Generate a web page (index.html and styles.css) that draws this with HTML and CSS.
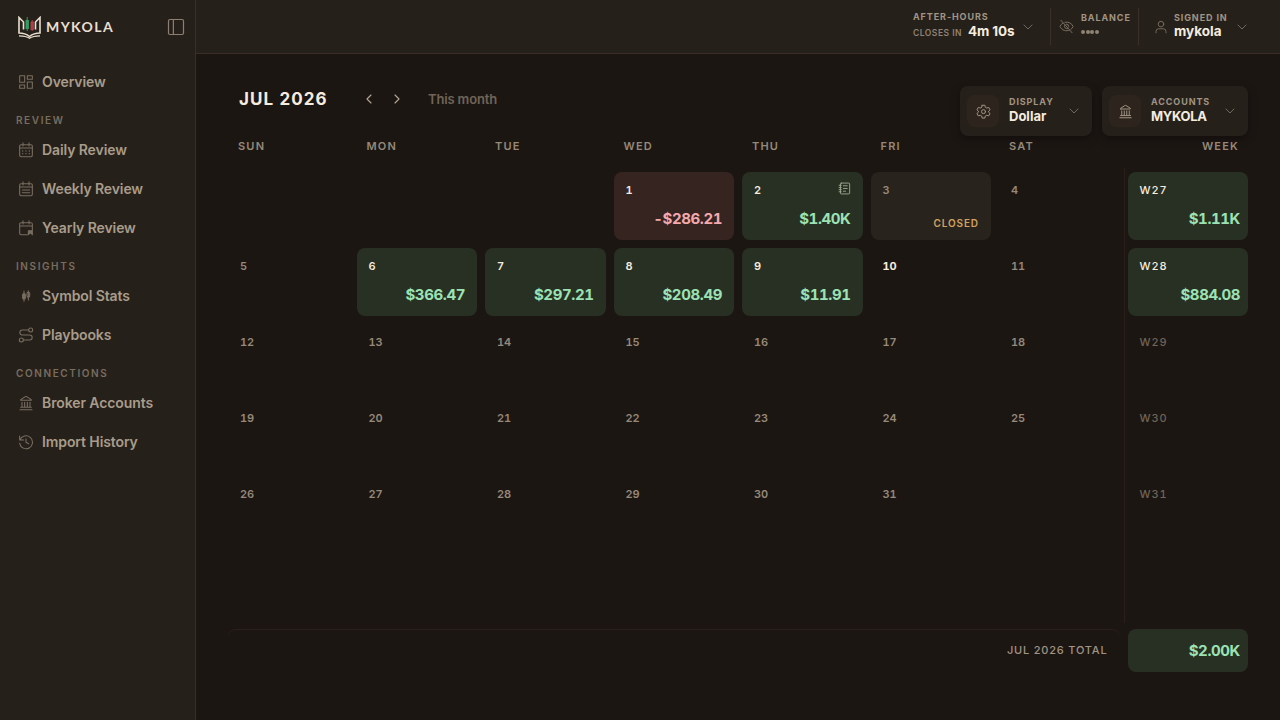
FILE: index.html
```html
<!DOCTYPE html>
<html lang="en">
<head>
  <meta charset="UTF-8" />
  <title>Mykola - Jul 2026</title>
  <link rel="stylesheet" href="styles.css">
</head>
<body>

  <!-- Shared icons -->
  <svg class="sprite" aria-hidden="true">
    <symbol id="i-chevron" viewBox="0 0 24 24"><path d="m6 9 6 6 6-6"/></symbol>
    <symbol id="i-bank" viewBox="0 0 24 24"><path d="M3 22h18M6 18v-7M10 18v-7M14 18v-7M18 18v-7M4 18.500h16M4.500 8h15a.6.6 0 0 0 .3-1.100L13 2.500a2 2 0 0 0-2 0L4.200 6.900A.6.6 0 0 0 4.500 8z"/></symbol>
  </svg>

  <div class="app">
    <!-- Sidebar -->
    <aside class="sidebar">
      <div class="brand">
        <svg class="logo" viewBox="0 0 25 23">
          <path class="book" d="M6.500 13.500V6L2 1.500V17C6 17 10 18.500 12.500 20.500 15 18.500 19 17 23 17V1.500L18.500 6V13.500"/>
          <path class="book thin" d="M2 19.800C6.500 19.800 10 20.500 12.500 22.300 15 20.500 18.500 19.800 23 19.800"/>
          <path class="up" d="M10.200 1v14"/>
          <rect class="up-body" x="8.500" y="4" width="3.400" height="9"/>
          <path class="down" d="M15.200 4v11"/>
          <rect class="down-body" x="13.500" y="5.500" width="3.400" height="8.500"/>
        </svg>
        <span class="brand-name">MYKOLA</span>
        <svg class="icon toggle" viewBox="0 0 24 24"><rect x="2" y="2" width="20" height="20" rx="2"/><path d="M8.500 2v20"/></svg>
      </div>

      <nav>
        <a class="nav-item"><svg class="icon" viewBox="0 0 24 24"><rect x="2.500" y="2.500" width="7.500" height="10"/><rect x="14" y="2.500" width="7.500" height="5.500"/><rect x="14" y="12" width="7.500" height="9.500"/><rect x="2.500" y="16.500" width="7.500" height="5"/></svg><span>Overview</span></a>

        <div class="nav-title">REVIEW</div>
        <a class="nav-item"><svg class="icon" viewBox="0 0 24 24"><rect x="2.500" y="4" width="19" height="18" rx="2"/><path d="M7.500 1v5M16.500 1v5M2.500 9h19"/><path class="bold" d="M7 13.500h.01M12 13.500h.01M17 13.500h.01M7 17.500h.01M12 17.500h.01M17 17.500h.01"/></svg><span>Daily Review</span></a>
        <a class="nav-item"><svg class="icon" viewBox="0 0 24 24"><rect x="2.500" y="4" width="19" height="18" rx="2"/><path d="M7.500 1v5M16.500 1v5M2.500 9h19M6.500 13.500h11M6.500 17.500h11"/></svg><span>Weekly Review</span></a>
        <a class="nav-item"><svg class="icon" viewBox="0 0 24 24"><path d="M14 22H4.500a2 2 0 0 1-2-2V6a2 2 0 0 1 2-2h15a2 2 0 0 1 2 2v9.500M7.500 1v5M16.500 1v5M2.500 9h19"/><path class="solid" d="M15.500 22v-6h6V22l-2.500-3z"/></svg><span>Yearly Review</span></a>

        <div class="nav-title">INSIGHTS</div>
        <a class="nav-item"><svg class="icon" viewBox="0 0 24 24"><path d="M9 4.500v15.500M15.500 4v14"/><rect class="solid" x="7" y="8.500" width="4" height="8" rx="1.500"/><rect x="13.500" y="6.500" width="4" height="7" rx="1.500"/></svg><span>Symbol Stats</span></a>
        <a class="nav-item"><svg class="icon" viewBox="0 0 24 24"><circle cx="19" cy="4.500" r="3"/><circle cx="5" cy="19.500" r="3"/><path d="M16 4.500H6.500a3.700 3.700 0 0 0 0 7.500h11a3.700 3.700 0 0 1 0 7.500H8"/></svg><span>Playbooks</span></a>

        <div class="nav-title">CONNECTIONS</div>
        <a class="nav-item"><svg class="icon"><use href="#i-bank"/></svg><span>Broker Accounts</span></a>
        <a class="nav-item"><svg class="icon" viewBox="0 0 24 24"><path d="M2.500 3v6h6M3 9a9.700 9.700 0 1 1-.5 5M12 7v5.500l4 2"/></svg><span>Import History</span></a>
      </nav>
    </aside>

    <div class="content">
      <!-- Top bar -->
      <header class="topbar">
        <div class="session">
          <div>
            <div class="label">AFTER-HOURS</div>
            <div class="session-row"><span class="closes">CLOSES IN</span><b class="countdown">4m 10s</b></div>
          </div>
          <svg class="icon chevron"><use href="#i-chevron"/></svg>
        </div>
        <div class="balance">
          <svg class="icon" viewBox="0 0 24 24"><path d="M3 2l18 20M9.500 5.200A11 11 0 0 1 22.500 12a15 15 0 0 1-3.200 4.500M6 6.500A14 14 0 0 0 1.500 12c3 6 9.500 8.500 15.500 5.800M9.500 9.500a3.800 3.800 0 0 0 5.300 5.300M12 8.200a3.800 3.800 0 0 1 3.800 3.800"/></svg>
          <div>
            <div class="label">BALANCE</div>
            <div class="dots"><i></i><i></i><i></i><i></i></div>
          </div>
        </div>
        <div class="user">
          <svg class="icon" viewBox="0 0 24 24"><circle cx="12" cy="7" r="4.800"/><path d="M3.500 22v-2.500a4.500 4.500 0 0 1 4.500-4.500h8a4.500 4.500 0 0 1 4.500 4.500V22"/></svg>
          <div>
            <div class="label">SIGNED IN</div>
            <b class="username">mykola</b>
          </div>
          <svg class="icon chevron"><use href="#i-chevron"/></svg>
        </div>
      </header>

      <main>
        <div class="toolbar">
          <h1>JUL 2026</h1>
          <div class="month-nav">
            <svg class="icon" viewBox="0 0 24 24"><path d="m15 6-6 6 6 6"/></svg>
            <svg class="icon" viewBox="0 0 24 24"><path d="m9 6 6 6-6 6"/></svg>
          </div>
          <span class="this-month">This month</span>

          <div class="picker display">
            <span class="picker-icon"><svg class="icon" viewBox="0 0 24 24"><path d="M9.800 2h4.400l.7 3.200 2.300 1.300 3.100-1 2.200 3.800L20.100 11.500v1.500l2.400 2.200-2.200 3.800-3.100-1-2.300 1.300-.7 3.200H9.800l-.7-3.200-2.300-1.300-3.100 1-2.200-3.800 2.400-2.200v-1.500L1.500 9.300l2.200-3.800 3.100 1 2.300-1.300z"/><circle cx="12" cy="12.200" r="3.200"/></svg></span>
            <div><div class="label">DISPLAY</div><b>Dollar</b></div>
            <svg class="icon chevron"><use href="#i-chevron"/></svg>
          </div>
          <div class="picker accounts">
            <span class="picker-icon"><svg class="icon"><use href="#i-bank"/></svg></span>
            <div><div class="label">ACCOUNTS</div><b>MYKOLA</b></div>
            <svg class="icon chevron"><use href="#i-chevron"/></svg>
          </div>
        </div>

        <div class="weekdays">
          <span>SUN</span><span>MON</span><span>TUE</span><span>WED</span><span>THU</span><span>FRI</span><span>SAT</span><span class="week-head">WEEK</span>
        </div>

        <div class="calendar">
          <div class="days">
            <div></div><div></div><div></div>
            <div class="cell loss"><span>1</span><b>-$286.21</b></div>
            <div class="cell win"><span>2</span><svg class="icon note" viewBox="0 0 24 24"><rect x="4.500" y="2" width="17" height="20" rx="1.500"/><path d="M2 6h4M2 10h4M2 14h4M2 18h4M10 7h7M10 12h7M10 17h4"/></svg><b>$1.40K</b></div>
            <div class="cell closed"><span>3</span><em>CLOSED</em></div>
            <div class="cell"><span>4</span></div>

            <div class="cell"><span>5</span></div>
            <div class="cell win"><span>6</span><b>$366.47</b></div>
            <div class="cell win"><span>7</span><b>$297.21</b></div>
            <div class="cell win"><span>8</span><b>$208.49</b></div>
            <div class="cell win"><span>9</span><b>$11.91</b></div>
            <div class="cell today"><span>10</span></div>
            <div class="cell"><span>11</span></div>

            <div class="cell"><span>12</span></div>
            <div class="cell"><span>13</span></div>
            <div class="cell"><span>14</span></div>
            <div class="cell"><span>15</span></div>
            <div class="cell"><span>16</span></div>
            <div class="cell"><span>17</span></div>
            <div class="cell"><span>18</span></div>

            <div class="cell"><span>19</span></div>
            <div class="cell"><span>20</span></div>
            <div class="cell"><span>21</span></div>
            <div class="cell"><span>22</span></div>
            <div class="cell"><span>23</span></div>
            <div class="cell"><span>24</span></div>
            <div class="cell"><span>25</span></div>

            <div class="cell"><span>26</span></div>
            <div class="cell"><span>27</span></div>
            <div class="cell"><span>28</span></div>
            <div class="cell"><span>29</span></div>
            <div class="cell"><span>30</span></div>
            <div class="cell"><span>31</span></div>
          </div>
          <div class="weeks">
            <div class="cell week win"><span>W27</span><b>$1.11K</b></div>
            <div class="cell week win"><span>W28</span><b>$884.08</b></div>
            <div class="cell week"><span>W29</span></div>
            <div class="cell week"><span>W30</span></div>
            <div class="cell week"><span>W31</span></div>
          </div>
        </div>

        <div class="total">
          <div class="total-label">JUL 2026 TOTAL</div>
          <div class="total-value">$2.00K</div>
        </div>
      </main>
    </div>
  </div>

</body>
</html>
```
FILE: styles.css
```css
* { box-sizing: border-box; }

body {
  margin: 0;
  font-family: Inter, "Liberation Sans", sans-serif;
  background: #1c1613;
  color: #f5ecdf;
}

.sprite { display: none; }

.app {
  display: flex;
  height: 720px;
  overflow: hidden;
}

.icon {
  width: 15px;
  height: 15px;
  flex: none;
  fill: none;
  stroke: currentColor;
  stroke-width: 1.6;
  stroke-linecap: round;
  stroke-linejoin: round;
}

.icon .solid { fill: currentColor; }
.icon .bold { stroke-width: 2; }

/* Sidebar */
.sidebar {
  width: 196px;
  flex: none;
  background: #26201b;
  border-right: 1px solid #3b2d27;
}

.brand {
  display: flex;
  align-items: center;
  height: 54px;
  padding: 0 10px 0 17px;
}

.logo {
  width: 25px;
  height: 23px;
  fill: none;
}

.book { stroke: #e9dfd0; stroke-width: 1.6; }
.thin { stroke-width: 1.2; }
.up { stroke: #2f9e62; }
.up-body { fill: #2f9e62; }
.down { stroke: #b23b4a; }
.down-body { fill: #b23b4a; }

.brand-name {
  font-family: Lato, sans-serif;
  font-size: 14px;
  line-height: 16px;
  font-weight: 700;
  letter-spacing: 1.4px;
  margin-left: 4px;
  color: #e9dfd0;
}

.toggle {
  width: 18px;
  height: 18px;
  margin-left: auto;
  color: #8c8072;
}

nav { padding: 9px 16px 0; }

.nav-item {
  display: flex;
  align-items: center;
  gap: 8px;
  height: 39px;
  padding: 0 0 2px 2px;
  font-size: 14px;
  line-height: 17px;
  letter-spacing: -0.1px;
  font-weight: 600;
  color: #a89c8a;
}

.nav-item .icon {
  width: 16px;
  height: 16px;
  color: #786e60;
}

.nav-title {
  height: 29px;
  padding-top: 12px;
  font-size: 10px;
  line-height: 12px;
  font-weight: 600;
  letter-spacing: 1.6px;
  color: #786d5f;
}

/* Top bar */
.content { flex: 1; }

.topbar {
  display: flex;
  justify-content: flex-end;
  height: 54px;
  padding: 8px 30px 8px 0;
  background: #26201b;
  border-bottom: 1px solid #3b2d27;
}

.topbar > div {
  display: flex;
  align-items: center;
  color: #786e60;
}

.topbar b { color: #f5ecdf; }

.label {
  font-size: 9px;
  line-height: 11px;
  font-weight: 700;
  letter-spacing: 0.9px;
  color: #a09483;
}

.chevron { width: 16px; height: 16px; stroke-width: 1.4; }

.session { width: 137px; }
.session .chevron { margin-left: 5px; }
.session > div { padding-bottom: 3px; }

.session-row {
  display: flex;
  align-items: baseline;
  gap: 6px;
}

.closes {
  font-size: 8.500px;
  font-weight: 600;
  letter-spacing: 0.5px;
  color: #8f8373;
}

.countdown {
  font-size: 13.500px;
  line-height: 18px;
  letter-spacing: -0.1px;
}

.balance {
  width: 88px;
  gap: 7px;
  padding-left: 8px;
  border-left: 1px solid #3b2d27;
}

.balance > div,
.user > div { padding-bottom: 2px; }

.dots {
  display: flex;
  gap: 0.500px;
  padding: 7px 0 6px;
}

.dots i {
  width: 4px;
  height: 4px;
  border-radius: 50%;
  background: #8f8373;
}

.user {
  width: 112px;
  padding-left: 15px;
  border-left: 1px solid #3b2d27;
}

.user > .icon:first-child {
  width: 14px;
  height: 14px;
}

.user > div { margin-left: 6px; }
.user .chevron { margin-left: auto; }

.username {
  display: block;
  font-size: 13.500px;
  line-height: 16px;
}

/* Calendar header */
main { padding: 32px 32px 0; }

.toolbar {
  display: flex;
  align-items: flex-start;
  height: 50px;
}

h1 {
  width: 122px;
  margin: 0;
  padding-left: 11px;
  font-size: 17px;
  line-height: 27px;
  letter-spacing: 1.1px;
  font-weight: 700;
}

.month-nav {
  display: flex;
  gap: 12px;
  width: 78px;
  padding: 5px 0 0 11px;
  color: #b5a998;
}

.month-nav .icon { width: 16px; height: 16px; }

.this-month {
  font-size: 13px;
  line-height: 27px;
  letter-spacing: -0.15px;
  font-weight: 600;
  color: #6f6456;
}

.picker {
  display: flex;
  align-items: center;
  height: 50px;
  padding: 0 10px 0 7px;
  margin-left: 10px;
  border-radius: 8px;
  background: #26201b;
  box-shadow: 0 3px 8px rgba(0, 0, 0, 0.35);
}

.display { width: 132px; margin-left: auto; }
.accounts { width: 146px; }

.picker > div { padding-bottom: 1px; }

.picker b {
  display: block;
  font-size: 13px;
  line-height: 18px;
}

.accounts b { letter-spacing: -0.3px; }

.picker .chevron {
  margin-left: auto;
  color: #786e60;
}

.picker-icon {
  display: grid;
  place-items: center;
  width: 32px;
  height: 32px;
  margin-right: 10px;
  border-radius: 8px;
  background: #2d251d;
  color: #a09483;
}

.weekdays {
  display: grid;
  grid-template-columns: repeat(8, 1fr);
  column-gap: 8px;
  height: 32px;
  padding-top: 3px;
  font-size: 11px;
  line-height: 14px;
  font-weight: 600;
  letter-spacing: 1.2px;
  color: #958979;
}

.weekdays span { padding-left: 10px; }
.weekdays .week-head { padding-right: 9px; text-align: right; }

/* Calendar */
.calendar {
  display: flex;
  height: 455px;
}

.days {
  flex: 1;
  padding-top: 4.400px;
  display: grid;
  grid-template-columns: repeat(7, 1fr);
  grid-auto-rows: 68px;
  align-content: start;
  gap: 8px;
}

.weeks {
  width: 124.500px;
  margin-left: 4px;
  padding: 4.400px 0 0 3px;
  border-left: 1px solid #291f1b;
  display: grid;
  grid-auto-rows: 68px;
  align-content: start;
  gap: 8px;
}

.cell {
  display: grid;
  grid-template-columns: 1fr auto;
  padding: 10px 12px;
  border-radius: 8px;
  font-size: 11px;
  line-height: 16px;
  font-weight: 600;
  font-variant-numeric: tabular-nums;
  color: #958979;
}

.cell b,
.cell em {
  grid-column: 1 / -1;
  align-self: end;
  text-align: right;
}

.cell b {
  font-size: 15px;
  line-height: 22px;
  font-weight: 700;
  letter-spacing: -0.4px;
}

.cell em {
  font-size: 10px;
  line-height: 14px;
  font-style: normal;
  letter-spacing: 0.9px;
  color: #d3a160;
}

.win { background: #283024; }
.loss { background: #352420; }
.closed { background: #29231d; }

.win span,
.loss span,
.today span { color: #f5ecdf; }

.today { font-weight: 700; }

.win b { color: #9be2b4; }
.loss b { color: #f4a9ae; }

.note {
  width: 13px;
  height: 13px;
  color: #a5ac94;
}

.week { padding-right: 8px; color: #6f6456; }
.week > span { font-weight: 500; letter-spacing: 0.9px; }

/* Month total */
.total {
  display: flex;
  gap: 8px;
  height: 43px;
  margin-top: 6px;
}

.total-label {
  flex: 1;
  padding-right: 12px;
  border-top: 1px solid #291f1b;
  border-radius: 8px;
  text-align: right;
  font-size: 11px;
  line-height: 41px;
  font-weight: 500;
  letter-spacing: 0.8px;
  color: #a09483;
}

.total-value {
  width: 120.500px;
  padding-right: 8px;
  border-radius: 8px;
  background: #283024;
  text-align: right;
  font-size: 15px;
  line-height: 43px;
  font-weight: 700;
  letter-spacing: -0.4px;
  font-variant-numeric: tabular-nums;
  color: #9be2b4;
}
```
